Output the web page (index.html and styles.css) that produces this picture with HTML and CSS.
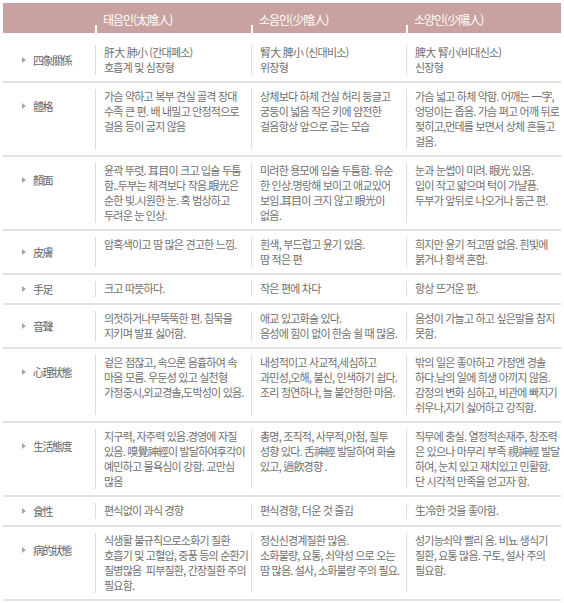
FILE: index.html
```html
<!DOCTYPE html>
<html lang="ko">
<head>
<meta charset="utf-8">
<title>사상체질 비교</title>
<link rel="stylesheet" href="styles.css">
</head>
<body>
<div class="table">
  <div class="head">
    <div class="hcell hcell-blank"></div>
    <div class="hcell">태음인(太陰人)</div>
    <div class="hcell">소음인(少陰人)</div>
    <div class="hcell">소양인(少陽人)</div>
  </div>

  <div class="row row-first">
    <div class="label"><span class="arrow"></span>四象關係</div>
    <div class="cell">肝大 肺小 (간대폐소)<br>호흡계 및 심장형</div>
    <div class="cell">腎大 脾小 (신대비소)<br>위장형</div>
    <div class="cell">脾大 腎小(비대신소)<br>신장형</div>
  </div>

  <div class="row">
    <div class="label"><span class="arrow"></span>體格</div>
    <div class="cell">가슴 약하고 복부 견실 골격 장대<br>수족 큰 편. 배 내밀고 안정적으로<br>걸음 등이 굽지 않음</div>
    <div class="cell">상체보다 하체 건실 허리 둥글고<br>궁둥이 넓음 작은 키에 얌전한<br>걸음항상 앞으로 굽는 모습</div>
    <div class="cell">가슴 넓고 하체 약함. 어깨는 一字,<br>엉덩이는 좁음. 가슴 펴고 어깨 뒤로<br>젖히고,먼데를 보면서 상체 흔들고<br>걸음.</div>
  </div>

  <div class="row">
    <div class="label"><span class="arrow"></span>顏面</div>
    <div class="cell">윤곽 뚜렷. 耳目이 크고 입술 두툼<br>함..두부는 체격보다 작음.眼光은<br>순한 빛.시원한 눈. 혹 범상하고<br>두려운 눈 인상.</div>
    <div class="cell">미려한 용모에 입술 두툼함. 유순<br>한 인상.명랑해 보이고 애교있어<br>보임.耳目이 크지 않고 眼光이<br>없음.</div>
    <div class="cell">눈과 눈썹이 미려. 眼光 있음.<br>입이 작고 얇으며 턱이 가냘픔.<br>두부가 앞뒤로 나오거나 둥근 편.</div>
  </div>

  <div class="row">
    <div class="label"><span class="arrow"></span>皮膚</div>
    <div class="cell">암흑색이고 땀 많은 견고한 느낌.</div>
    <div class="cell">흰색, 부드럽고 윤기 있음.<br>땀 적은 편</div>
    <div class="cell">희지만 윤기 적고땀 없음. 흰빛에<br>붉거나 황색 혼합.</div>
  </div>

  <div class="row">
    <div class="label"><span class="arrow"></span>手足</div>
    <div class="cell">크고 따뜻하다.</div>
    <div class="cell">작은 편에 차다</div>
    <div class="cell">항상 뜨거운 편.</div>
  </div>

  <div class="row">
    <div class="label"><span class="arrow"></span>音聲</div>
    <div class="cell">의젓하거나무뚝뚝한 편. 침묵을<br>지키며 발표 싫어함.</div>
    <div class="cell">애교 있고화술 있다.<br>음성에 힘이 없이 한숨 쉴 때 많음.</div>
    <div class="cell">음성이 가늘고 하고 싶은말을 참지<br>못함.</div>
  </div>

  <div class="row">
    <div class="label"><span class="arrow"></span>心理狀態</div>
    <div class="cell">겉은 점잖고, 속으론 음흉하여 속<br>마음 모름. 우둔성 있고 실천형<br>가정중시,외교경솔,도박성이 있음.</div>
    <div class="cell">내성적이고 사교적,세심하고<br>과민성,오해, 불신, 인색하기 쉽다.<br>조리 정연하나, 늘 불안정한 마음.</div>
    <div class="cell">밖의 일은 좋아하고 가정엔 경솔<br>하다.남의 일에 희생 아끼지 않음.<br>감정의 변화 심하고, 비관에 빠지기<br>쉬우나,지기 싫어하고 강직함.</div>
  </div>

  <div class="row">
    <div class="label"><span class="arrow"></span>生活態度</div>
    <div class="cell">지구력, 자주력 있음.경영에 자질<br>있음. 嗅覺神經이 발달하여후각이<br>예민하고 물욕심이 강함. 교만심<br>많음</div>
    <div class="cell">총명, 조직적, 사무적,아첨, 질투<br>성향 있다. 舌神經 발달하여 화술<br>있고, 過飮경향 .</div>
    <div class="cell">직무에 충실. 열정적손재주, 창조력<br>은 있으나 마무리 부족 視神經 발달<br>하여, 눈치 있고 재치있고 민활함.<br>단 시각적 만족을 얻고자 함.</div>
  </div>

  <div class="row">
    <div class="label"><span class="arrow"></span>食性</div>
    <div class="cell">편식없이 과식 경향</div>
    <div class="cell">편식경향, 더운 것 즐김</div>
    <div class="cell">生冷한 것을 좋아함.</div>
  </div>

  <div class="row">
    <div class="label"><span class="arrow"></span>病的狀態</div>
    <div class="cell">식생활 불규칙으로소화기 질환<br>호흡기 및 고혈압, 중풍 등의 순환기<br>질병많음&nbsp; 피부질환, 간장질환 주의<br>필요함.</div>
    <div class="cell">정신신경계질환 많음.<br>소화불량, 요통, 쇠약성 으로 오는<br>땀 많음. 설사, 소화불량 주의 필요.</div>
    <div class="cell">성기능쇠약 빨리 옴. 비뇨 생식기<br>질환, 요통 많음. 구토, 설사 주의<br>필요함.</div>
  </div>
</div>
</body>
</html>
```

FILE: styles.css
```css
html, body {
  margin: 0;
  padding: 0;
  background: #ffffff;
}

body {
  font-family: "Noto Sans CJK KR", "Noto Sans", sans-serif;
  color: #6f6f6f;
}

.table {
  width: 558px;
  margin: 3px 0 0 3px;
}

.head {
  display: grid;
  grid-template-columns: 92px 156px 155px 155px;
  height: 30px;
  background: #c9a1a1;
}

.hcell {
  box-sizing: border-box;
  padding: 3px 0 0 8px;
  line-height: 27px;
  font-size: 12px;
  letter-spacing: -1px;
  color: #ffffff;
  white-space: nowrap;
  background: linear-gradient(#ffffff, #ffffff) left bottom / 2px 8px no-repeat;
}

.hcell-blank {
  background: none;
}

.row {
  display: grid;
  grid-template-columns: 92px 156px 155px 155px;
  padding: 6px 0;
  border-bottom: 2px solid #e3e3e3;
}

.row-first {
  padding-top: 12px;
}

.label {
  align-self: stretch;
  max-height: 34px;
  display: flex;
  align-items: center;
  padding-left: 19px;
  font-size: 11px;
  letter-spacing: -1.5px;
  color: #666666;
  white-space: nowrap;
}

.arrow {
  width: 0;
  height: 0;
  border-top: 3px solid transparent;
  border-bottom: 3px solid transparent;
  border-left: 4px solid #a8a8a8;
  margin-right: 7px;
}

.cell {
  border-left: 1px solid #dddddd;
  padding-left: 8px;
  font-size: 11px;
  line-height: 15px;
  letter-spacing: -0.8px;
  white-space: nowrap;
}
```
